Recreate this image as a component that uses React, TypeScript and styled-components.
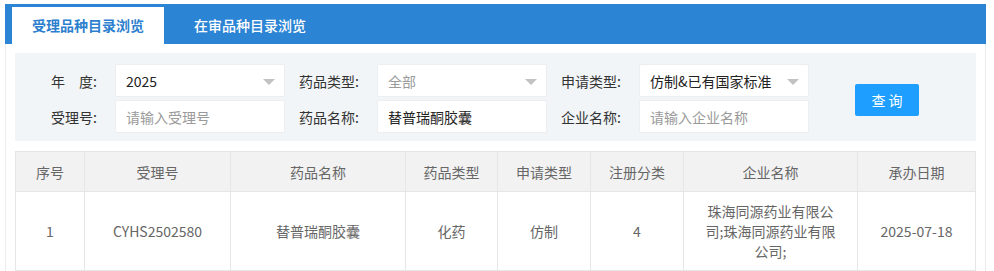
import React from 'react';
import styled, {createGlobalStyle} from 'styled-components';

const GlobalStyle = createGlobalStyle`
  body {
    margin: 0;
    padding: 4px 8px 0 5px;
    background: #fff;
    font-family: "Noto Sans CJK SC", "Liberation Sans", sans-serif;
    font-size: 14px;
    color: #333;
  }
`;

type Field = {label: string; value?: string; placeholder?: string; select?: boolean};

const fields: Field[][] = [
    [
        {label: '年　度:', value: '2025', select: true},
        {label: '药品类型:', placeholder: '全部', select: true},
        {label: '申请类型:', value: '仿制&已有国家标准', select: true},
    ],
    [
        {label: '受理号:', placeholder: '请输入受理号'},
        {label: '药品名称:', value: '替普瑞酮胶囊'},
        {label: '企业名称:', placeholder: '请输入企业名称'},
    ],
];

const columns = [
    {title: '序号', width: 69},
    {title: '受理号', width: 146},
    {title: '药品名称', width: 175},
    {title: '药品类型', width: 92},
    {title: '申请类型', width: 93},
    {title: '注册分类', width: 93},
    {title: '企业名称', width: 174},
    {title: '承办日期', width: 118},
];

const rows = [
    ['1', 'CYHS2502580', '替普瑞酮胶囊', '化药', '仿制', '4', '珠海同源药业有限公司;珠海同源药业有限公司;', '2025-07-18'],
];

export default function App() {
    return (
        <>
            <GlobalStyle/>
            <PageStyled>
                <TabBarStyled>
                    <TabStyled $active>受理品种目录浏览</TabStyled>
                    <TabStyled>在审品种目录浏览</TabStyled>
                </TabBarStyled>
                <ContentStyled>
                    <SearchPanelStyled>
                        <FormGridStyled>
                            {fields.map((row, ri) => (
                                <FormRowStyled key={ri}>
                                    {row.map(f => (
                                        <FieldStyled key={f.label}>
                                            <LabelStyled>{f.label}</LabelStyled>
                                            <InputBoxStyled $placeholder={!f.value}>
                                                {f.value || f.placeholder}
                                                {f.select && <ArrowStyled/>}
                                            </InputBoxStyled>
                                        </FieldStyled>
                                    ))}
                                </FormRowStyled>
                            ))}
                        </FormGridStyled>
                        <ButtonStyled>查 询</ButtonStyled>
                    </SearchPanelStyled>
                    <TableStyled>
                        <colgroup>
                            {columns.map(c => <col key={c.title} style={{width: c.width}}/>)}
                        </colgroup>
                        <thead>
                        <tr>
                            {columns.map(c => <HeadCellStyled key={c.title}>{c.title}</HeadCellStyled>)}
                        </tr>
                        </thead>
                        <tbody>
                        {rows.map((r, i) => (
                            <tr key={i}>
                                {r.map((v, j) => <CellStyled key={j}>{v}</CellStyled>)}
                            </tr>
                        ))}
                        </tbody>
                    </TableStyled>
                </ContentStyled>
            </PageStyled>
        </>
    );
}

const PageStyled = styled.div`
  width: 981px;
  box-sizing: border-box;
  border-left: 1px solid #ececec;
  border-right: 1px solid #ececec;
  min-height: calc(100vh - 4px);
`

const TabBarStyled = styled.div`
  display: flex;
  gap: 10px;
  height: 40px;
  box-sizing: border-box;
  padding: 3px 0 0 7px;
  margin: 0 -1px;
  background: #2c84d4;
`

const TabStyled = styled.div<{ $active?: boolean }>`
  display: flex;
  align-items: center;
  height: 37px;
  padding: 0 20px 2px;
  font-size: 14px;
  font-weight: ${p => p.$active ? 600 : 500};
  color: ${p => p.$active ? '#2c7fce' : '#fff'};
  background: ${p => p.$active ? '#fff' : 'transparent'};
  box-sizing: border-box;
`

const ContentStyled = styled.div`
  padding: 9px 9px 0;
`

const SearchPanelStyled = styled.div`
  display: flex;
  align-items: center;
  background: #f2f5f7;
  padding: 11px 0 8px 8px;
`

const FormGridStyled = styled.div`
  display: flex;
  flex-direction: column;
  gap: 3px;
`

const FormRowStyled = styled.div`
  display: flex;
`

const FieldStyled = styled.div`
  display: flex;
  align-items: center;
`

const LabelStyled = styled.div`
  width: 92px;
  box-sizing: border-box;
  padding-right: 18px;
  text-align: right;
  color: #333;
  font-size: 14px;
`

const InputBoxStyled = styled.div<{ $placeholder?: boolean }>`
  position: relative;
  width: 170px;
  height: 33px;
  box-sizing: border-box;
  display: flex;
  align-items: center;
  padding-left: 10px;
  background: #fff;
  border: 1px solid #eceeef;
  border-radius: 2px;
  font-size: 14px;
  color: ${p => p.$placeholder ? '#9a9a9a' : '#222'};
  white-space: nowrap;
`

const ArrowStyled = styled.span`
  position: absolute;
  right: 9px;
  top: 14px;
  width: 0;
  height: 0;
  border-left: 6px solid transparent;
  border-right: 6px solid transparent;
  border-top: 6px solid #c2c2c2;
`

const ButtonStyled = styled.div`
  margin-left: 46px;
  margin-top: 2px;
  width: 64px;
  height: 32px;
  display: flex;
  align-items: center;
  justify-content: center;
  background: #1e9fff;
  color: #fff;
  border-radius: 2px;
  font-size: 14px;
`

const TableStyled = styled.table`
  margin-top: 10px;
  width: 960px;
  table-layout: fixed;
  border-collapse: collapse;
  color: #666;
  font-size: 14px;
  line-height: 20px;
`

const HeadCellStyled = styled.th`
  background: #f2f2f2;
  font-weight: normal;
  border: 1px solid #e6e6e6;
  padding: 10px 0 9px;
  text-align: center;
`

const CellStyled = styled.td`
  border: 1px solid #e6e6e6;
  padding: 9px 20px;
  text-align: center;
  height: 60px;
`
